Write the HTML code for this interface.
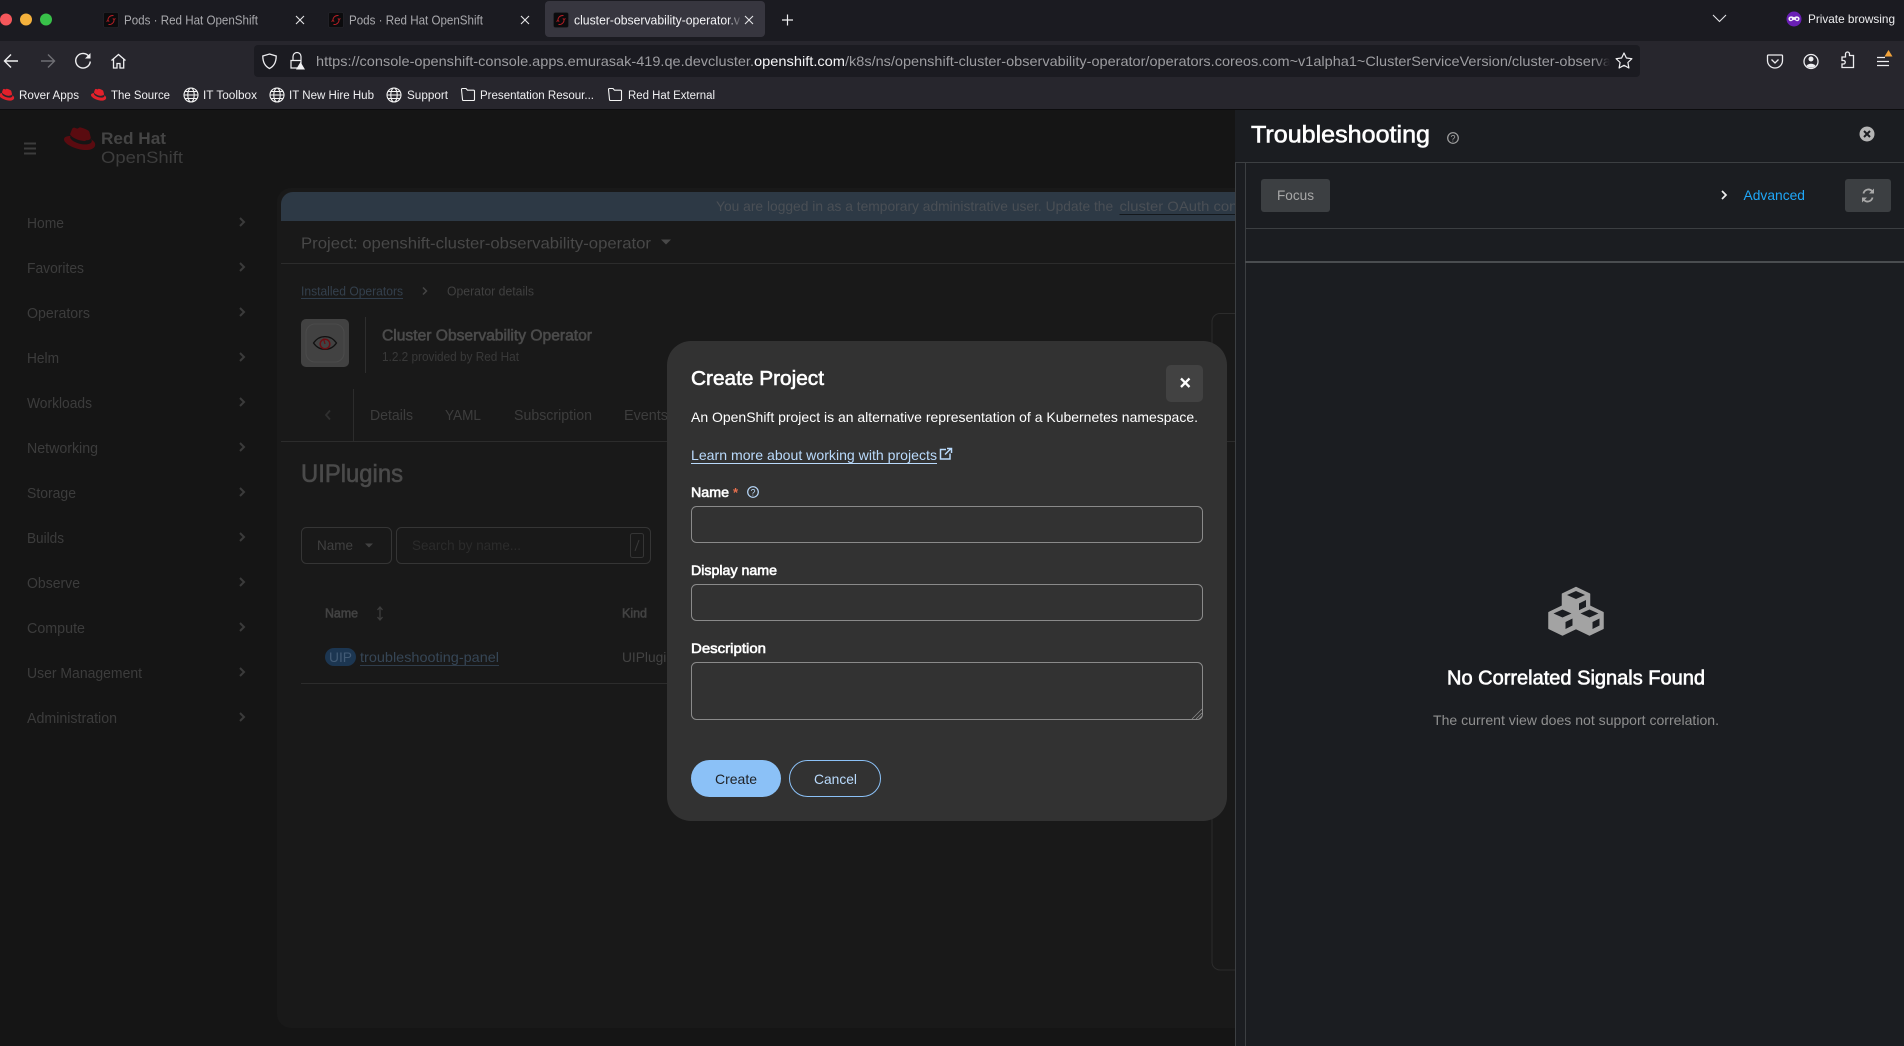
<!DOCTYPE html>
<html lang="en">
<head>
<meta charset="utf-8">
<title>Create Project</title>
<style>
html,body{margin:0;padding:0;background:#151515;overflow:hidden}
svg{display:block}
text{font-family:"Liberation Sans",sans-serif;white-space:pre}
.m{stroke-width:.35px;paint-order:stroke}
.h{stroke-width:.6px;paint-order:stroke}
</style>
</head>
<body>
<svg xmlns="http://www.w3.org/2000/svg" width="1904" height="1046" viewBox="0 0 1904 1046">
<defs>
<path id="hat" d="M21 14c2 0 5-.3 5-2.800 0-.2 0-.4-.1-.6l-1.200-5.100C24.400 4.400 24.100 3.800 21.900 2.700 20.200 1.800 16.500.4 15.400.4c-1 0-1.300 1.300-2.500 1.300-1.100 0-2-1-3.100-1-1 0-1.700.7-2.200 2.100 0 0-1.400 4-1.600 4.600 0 .1 0 .2 0 .3 0 1.600 6.400 7 15 7zM26.700 12.900c.3 1.400.3 1.500.3 1.700 0 2.400-2.700 3.700-6.200 3.700C12.900 18.300 6 13.700 6 10.600c0-.5.1-.9.3-1.300C3.500 9.500 0 10 0 13c0 5 11.900 11.200 21.300 11.200 7.200 0 9-3.300 9-5.800 0-2-1.700-4.300-4.800-5.500z"/>
<g id="globe" fill="none" stroke="#f4f4f4" stroke-width="1.100"><circle r="7"/><ellipse rx="3.200" ry="7"/><path d="M-7 0H7M-6 -3.500H6M-6 3.500H6"/></g>
<path id="folder" fill="none" stroke="#f4f4f4" stroke-width="1.100" d="M-6.500-5.500a1 1 0 0 1 1-1h3.500l1.500 1.700h6a1 1 0 0 1 1 1v8.300a1 1 0 0 1-1 1h-10a1 1 0 0 1-1-1z"/>
<g id="fav"><rect x="-7.500" y="-7.500" width="15" height="15" rx="2" fill="#0b0b0d" stroke="#2a2a30" stroke-width=".6"/><path d="M2.500-4.500C-1-5-3.500-2-3 1M-2.500 4.500C1 5 3.500 2 3-1M-4.500 1.500l1.500-1 1.200 1M4.500-1.500l-1.500 1-1.200-1" fill="none" stroke="#b81f26" stroke-width="1"/></g>
<path id="chev" fill="none" stroke="#3b3b3b" stroke-width="2" d="M-2-4L2 0L-2 4"/>
<g id="cube"><path d="M0-14.500L13.500-8V8L0 14.500L-13.500 8V-8Z" fill="#a3a3a3" stroke="#a3a3a3" stroke-width="1.500" stroke-linejoin="round"/><path d="M0-11L9-7L0-3L-9-7Z" fill="#1b1d21"/><path d="M3 1.500L10-2V5L3 8.500Z" fill="#1b1d21"/></g>
<linearGradient id="fadeD" x1="0" x2="1" y1="0" y2="0"><stop offset="0" stop-color="#1c1b21" stop-opacity="0"/><stop offset="1" stop-color="#1c1b21"/></linearGradient>
<linearGradient id="fadeT" x1="0" x2="1" y1="0" y2="0"><stop offset="0" stop-color="#37363f" stop-opacity="0"/><stop offset="1" stop-color="#37363f"/></linearGradient>
<clipPath id="pageClip"><rect x="0" y="110" width="1235" height="936"/></clipPath>
</defs>

<!-- browser chrome -->
<rect width="1904" height="41" fill="#1b1b21"/>
<rect y="41" width="1904" height="68" fill="#27262d"/>
<rect y="109" width="1904" height="1" fill="#0c0c0e"/>
<circle cx="6" cy="19.500" r="6" fill="#f5575b"/><circle cx="26" cy="19.500" r="6" fill="#f4b13c"/><circle cx="46" cy="19.500" r="6" fill="#38c149"/>

<use href="#fav" x="111" y="20"/>
<text x="124" y="24.500" font-size="12.500" fill="#a9a9ad" textLength="134" lengthAdjust="spacingAndGlyphs">Pods · Red Hat OpenShift</text>
<path d="M296 16l8 8m0-8l-8 8" stroke="#e5e5e8" stroke-width="1.100"/>
<use href="#fav" x="336" y="20"/>
<text x="349" y="24.500" font-size="12.500" fill="#a9a9ad" textLength="134" lengthAdjust="spacingAndGlyphs">Pods · Red Hat OpenShift</text>
<path d="M521 16l8 8m0-8l-8 8" stroke="#e5e5e8" stroke-width="1.100"/>
<rect x="545" y="1" width="220" height="36" rx="4" fill="#37363f"/>
<use href="#fav" x="561" y="20"/>
<text x="574" y="24.500" font-size="12.500" fill="#f4f4f6" textLength="166" lengthAdjust="spacingAndGlyphs">cluster-observability-operator.v</text>
<rect x="728" y="3" width="14" height="32" fill="url(#fadeT)"/>
<path d="M745 16l8 8m0-8l-8 8" stroke="#e5e5e8" stroke-width="1.100"/>
<path d="M787.500 14.500v11m-5.500-5.500h11" stroke="#efeff1" stroke-width="1.200"/>
<path d="M1713 15l6.500 6.500L1726 15" fill="none" stroke="#e6e6e8" stroke-width="1.100"/>
<circle cx="1794" cy="19" r="7.500" fill="#6a1fb5"/>
<path d="M1788.500 18c1-2 3.500-2 5.500-.7 2-1.300 4.500-1.300 5.500.7.500 2.500-2 4-3.500 2.800l-2-1-2 1c-1.500 1.200-4-.3-3.500-2.800z" fill="#f2edf9"/>
<circle cx="1791" cy="19" r="1" fill="#6a1fb5"/><circle cx="1797" cy="19" r="1" fill="#6a1fb5"/>
<text x="1808" y="23" font-size="12" fill="#eeeef0" textLength="87" lengthAdjust="spacingAndGlyphs">Private browsing</text>

<!-- nav icons -->
<path d="M18 61H5m6-6.500L4.500 61l6.500 6.500" fill="none" stroke="#f0f0f2" stroke-width="1.400"/>
<path d="M41 61h13m-6-6.500l6.500 6.500L48 67.500" fill="none" stroke="#6f6f74" stroke-width="1.400"/>
<path d="M89 56.500a7.300 7.300 0 1 0 1.300 5" fill="none" stroke="#f0f0f2" stroke-width="1.400"/><path d="M90.500 53v5.500h-5.500z" fill="#f0f0f2"/>
<path d="M111.500 60.500L118.500 54.500l7 6M113.500 59v9h3.500v-4.500h3V68h3.700v-9" fill="none" stroke="#f0f0f2" stroke-width="1.300"/>
<rect x="254" y="45" width="1386" height="32" rx="4" fill="#1b1b21"/>
<path d="M269.500 54l6.700 2c0 5.500-1.700 10-6.700 12.500-5-2.500-6.700-7-6.700-12.500z" fill="none" stroke="#ededf0" stroke-width="1.300"/>
<path d="M293 60v-3.500a4 4 0 0 1 8 0V60M291 60.500h10V68h-10z" fill="none" stroke="#ededf0" stroke-width="1.200"/>
<path d="M300.500 62l4.500 7.500h-9z" fill="#f2f2f4"/>
<text x="316" y="66" font-size="14" fill="#9d9da1" textLength="438" lengthAdjust="spacingAndGlyphs">https://console-openshift-console.apps.emurasak-419.qe.devcluster.</text>
<text x="754" y="66" font-size="14" fill="#f6f6f8" textLength="91" lengthAdjust="spacingAndGlyphs">openshift.com</text>
<text x="845" y="66" font-size="14" fill="#9d9da1" textLength="766" lengthAdjust="spacingAndGlyphs">/k8s/ns/openshift-cluster-observability-operator/operators.coreos.com~v1alpha1~ClusterServiceVersion/cluster-observa</text>
<rect x="1595" y="50" width="15" height="22" fill="url(#fadeD)"/><rect x="1610" y="46" width="28" height="30" fill="#1b1b21"/>
<path d="M1624 53l2.400 5 5.500.7-4 3.800 1 5.500-4.900-2.700-4.900 2.700 1-5.500-4-3.800 5.500-.7z" fill="none" stroke="#f0f0f2" stroke-width="1.200" stroke-linejoin="round"/>
<path d="M1768.500 55h13a1 1 0 0 1 1 1v4.500a7.500 7.500 0 0 1-15 0V56a1 1 0 0 1 1-1z" fill="none" stroke="#ededf0" stroke-width="1.300"/><path d="M1771.500 59.500l3.500 3.500 3.500-3.500" fill="none" stroke="#ededf0" stroke-width="1.300"/>
<circle cx="1811" cy="61.500" r="7" fill="none" stroke="#ededf0" stroke-width="1.300"/><circle cx="1811" cy="59" r="2.500" fill="#ededf0"/><path d="M1806.500 66c1-3 8-3 9 0a7 7 0 0 1-9 0z" fill="#ededf0"/>
<path d="M1842 67.500h11.500v-12h-4v-1.500a2 2 0 0 0-4 0v3h-3.500v3.500h1.500a1.700 1.700 0 0 1 0 3.500h-1.500z" fill="none" stroke="#ededf0" stroke-width="1.300"/>
<path d="M1877 57.500h8m-8 4h12m-12 4h12" stroke="#ededf0" stroke-width="1.300"/>
<path d="M1888.500 50l4 6.500h-8z" fill="#f2a33a"/>

<!-- bookmarks -->
<g transform="translate(-1,88.500) scale(.5)" fill="#e3212b"><use href="#hat"/></g>
<text x="19" y="99" font-size="11.500" fill="#efeff1" textLength="60" lengthAdjust="spacingAndGlyphs">Rover Apps</text>
<g transform="translate(91,88.500) scale(.5)" fill="#e3212b"><use href="#hat"/></g>
<text x="111" y="99" font-size="11.500" fill="#efeff1" textLength="59" lengthAdjust="spacingAndGlyphs">The Source</text>
<use href="#globe" x="191" y="95"/>
<text x="203" y="99" font-size="11.500" fill="#efeff1" textLength="54" lengthAdjust="spacingAndGlyphs">IT Toolbox</text>
<use href="#globe" x="277" y="95"/>
<text x="289" y="99" font-size="11.500" fill="#efeff1" textLength="85" lengthAdjust="spacingAndGlyphs">IT New Hire Hub</text>
<use href="#globe" x="394" y="95"/>
<text x="407" y="99" font-size="11.500" fill="#efeff1" textLength="41" lengthAdjust="spacingAndGlyphs">Support</text>
<use href="#folder" x="468" y="95"/>
<text x="480" y="99" font-size="11.500" fill="#efeff1" textLength="114" lengthAdjust="spacingAndGlyphs">Presentation Resour...</text>
<use href="#folder" x="615" y="95"/>
<text x="628" y="99" font-size="11.500" fill="#efeff1" textLength="87" lengthAdjust="spacingAndGlyphs">Red Hat External</text>

<!-- page behind backdrop -->
<g clip-path="url(#pageClip)">
<rect x="0" y="110" width="1904" height="936" fill="#151515"/>
<rect x="277" y="188" width="1000" height="840" rx="14" fill="#191919"/>
<path d="M24 143.500h12m-12 5h12m-12 5h12" stroke="#3c3c3c" stroke-width="2"/>
<g transform="translate(64,127) scale(1.030,.95)" fill="#5a0b10"><use href="#hat"/></g>
<text x="101" y="144" font-size="17" font-weight="700" fill="#444" textLength="65" lengthAdjust="spacingAndGlyphs">Red Hat</text>
<text x="101" y="163" font-size="17" fill="#3d3d3d" textLength="82" lengthAdjust="spacingAndGlyphs">OpenShift</text>

<g font-size="14.500" fill="#3c3c3c">
<text x="27" y="228" textLength="37" lengthAdjust="spacingAndGlyphs">Home</text>
<text x="27" y="273" textLength="57" lengthAdjust="spacingAndGlyphs">Favorites</text>
<text x="27" y="318" textLength="63" lengthAdjust="spacingAndGlyphs">Operators</text>
<text x="27" y="363" textLength="32" lengthAdjust="spacingAndGlyphs">Helm</text>
<text x="27" y="408" textLength="65" lengthAdjust="spacingAndGlyphs">Workloads</text>
<text x="27" y="453" textLength="71" lengthAdjust="spacingAndGlyphs">Networking</text>
<text x="27" y="498" textLength="49" lengthAdjust="spacingAndGlyphs">Storage</text>
<text x="27" y="543" textLength="37" lengthAdjust="spacingAndGlyphs">Builds</text>
<text x="27" y="588" textLength="53" lengthAdjust="spacingAndGlyphs">Observe</text>
<text x="27" y="633" textLength="58" lengthAdjust="spacingAndGlyphs">Compute</text>
<text x="27" y="678" textLength="115" lengthAdjust="spacingAndGlyphs">User Management</text>
<text x="27" y="723" textLength="90" lengthAdjust="spacingAndGlyphs">Administration</text>
</g>
<use href="#chev" x="242" y="222"/><use href="#chev" x="242" y="267"/><use href="#chev" x="242" y="312"/><use href="#chev" x="242" y="357"/><use href="#chev" x="242" y="402"/><use href="#chev" x="242" y="447"/><use href="#chev" x="242" y="492"/><use href="#chev" x="242" y="537"/><use href="#chev" x="242" y="582"/><use href="#chev" x="242" y="627"/><use href="#chev" x="242" y="672"/><use href="#chev" x="242" y="717"/>

<path d="M281 221V204a12 12 0 0 1 12-12H1240V221Z" fill="#2d3945"/>
<text x="716" y="211" font-size="14" fill="#4a4f55" textLength="401" lengthAdjust="spacingAndGlyphs">You are logged in as a temporary administrative user. Update the </text>
<text x="1119.500" y="211" font-size="14" fill="#4a4f55" textLength="122" lengthAdjust="spacingAndGlyphs">cluster OAuth conf</text>
<rect x="1119.500" y="214" width="116" height="1" fill="#14181c"/>

<text x="301" y="248.500" font-size="16" fill="#484848" textLength="350" lengthAdjust="spacingAndGlyphs">Project: openshift-cluster-observability-operator</text>
<path d="M661 239.500h10l-5 5z" fill="#484848"/>
<rect x="281" y="263" width="960" height="1" fill="#2c2c2c"/>

<text x="301" y="295.500" font-size="12.500" fill="#34404d" textLength="102" lengthAdjust="spacingAndGlyphs">Installed Operators</text>
<rect x="301" y="298" width="102" height="1" fill="#2f3c4a"/>
<path d="M423 287.500l3.500 3.500-3.500 3.500" fill="none" stroke="#444" stroke-width="1.500"/>
<text x="447" y="295.500" font-size="12.500" fill="#404040" textLength="87" lengthAdjust="spacingAndGlyphs">Operator details</text>

<rect x="301" y="319" width="48" height="48" rx="5" fill="#424242"/>
<rect x="306" y="324" width="38" height="38" rx="9" fill="none" stroke="#4b4b4b"/>
<path d="M313.500 343c6-8.500 17-8.500 23 0-6 8.500-17 8.500-23 0z" fill="none" stroke="#111" stroke-width="1.300"/>
<circle cx="325" cy="344" r="4.800" fill="none" stroke="#6a0f14" stroke-width="1.500"/><path d="M325 344l-1.500-5.500" stroke="#6a0f14" stroke-width="1.300"/>
<rect x="365" y="317" width="1" height="56" fill="#2e2e2e"/>
<text x="382" y="340.500" font-size="15.500" class="h" stroke="#4b4b4b" fill="#4b4b4b" textLength="210" lengthAdjust="spacingAndGlyphs">Cluster Observability Operator</text>
<text x="382" y="361" font-size="12.500" fill="#393939" textLength="137" lengthAdjust="spacingAndGlyphs">1.2.2 provided by Red Hat</text>

<path d="M330 410.500l-4 4.500 4 4.500" fill="none" stroke="#2f2f2f" stroke-width="1.800"/>
<rect x="353" y="389" width="1" height="52" fill="#2c2c2c"/>
<g font-size="14.500" fill="#3d3d3d">
<text x="370" y="420" textLength="43" lengthAdjust="spacingAndGlyphs">Details</text>
<text x="445" y="420" textLength="36" lengthAdjust="spacingAndGlyphs">YAML</text>
<text x="514" y="420" textLength="78" lengthAdjust="spacingAndGlyphs">Subscription</text>
<text x="624" y="420" textLength="44" lengthAdjust="spacingAndGlyphs">Events</text>
</g>
<rect x="281" y="441" width="960" height="1" fill="#2c2c2c"/>

<text x="301" y="482" font-size="25" class="h" stroke="#4a4a4a" fill="#4a4a4a" textLength="102" lengthAdjust="spacingAndGlyphs">UIPlugins</text>

<rect x="301.500" y="527.500" width="90" height="36" rx="5" fill="none" stroke="#353535"/>
<text x="317" y="550" font-size="14" fill="#404040" textLength="36" lengthAdjust="spacingAndGlyphs">Name</text>
<path d="M365 543.500h8l-4 4z" fill="#424242"/>
<rect x="396.500" y="527.500" width="254" height="36" rx="5" fill="none" stroke="#353535"/>
<text x="412" y="550" font-size="14" fill="#2b2b2b" textLength="109" lengthAdjust="spacingAndGlyphs">Search by name...</text>
<rect x="630.500" y="533.500" width="13" height="24" rx="2" fill="none" stroke="#353535"/>
<path d="M635 551l4-11" stroke="#3a3a3a" stroke-width="1"/>

<text x="325" y="617.500" font-size="12.500" class="h" stroke="#424242" fill="#424242" textLength="33" lengthAdjust="spacingAndGlyphs">Name</text>
<path d="M380 608v11m-2.500-9l2.500-3 2.500 3m-5 7l2.500 3 2.500-3" fill="none" stroke="#3d3d3d" stroke-width="1.300"/>
<text x="622" y="617.500" font-size="12.500" class="h" stroke="#424242" fill="#424242" textLength="25" lengthAdjust="spacingAndGlyphs">Kind</text>

<rect x="325" y="648" width="31" height="18" rx="9" fill="#1c3651"/>
<text x="329" y="662" font-size="14" fill="#425b75" textLength="23" lengthAdjust="spacingAndGlyphs">UIP</text>
<text x="360" y="662" font-size="14" fill="#364656" textLength="139" lengthAdjust="spacingAndGlyphs">troubleshooting-panel</text>
<rect x="360" y="665" width="139" height="1" fill="#2f3c4a"/>
<text x="622" y="662" font-size="14" fill="#434343" textLength="52" lengthAdjust="spacingAndGlyphs">UIPlugin</text>
<rect x="301" y="683" width="400" height="1" fill="#2c2c2c"/>

<path d="M1240 313.500H1220a8 8 0 0 0-8 8V962a8 8 0 0 0 8 8H1240" fill="none" stroke="#2c2c2c"/>
</g>

<!-- modal -->
<rect x="667" y="341" width="560" height="480" rx="24" fill="#323232"/>
<text x="691" y="385" font-size="20.500" class="h" stroke="#fff" fill="#fff" textLength="133" lengthAdjust="spacingAndGlyphs">Create Project</text>
<rect x="1166" y="365" width="37" height="37" rx="5" fill="#424242"/>
<path d="M1181 378.500l8.500 8.500m0-8.500l-8.500 8.500" stroke="#fff" stroke-width="2.300"/>
<text x="691" y="422" font-size="14" fill="#fff" textLength="507" lengthAdjust="spacingAndGlyphs">An OpenShift project is an alternative representation of a Kubernetes namespace.</text>
<text x="691" y="460" font-size="14" fill="#b9dafc" textLength="246" lengthAdjust="spacingAndGlyphs">Learn more about working with projects</text>
<rect x="691" y="463" width="246" height="1" fill="#b9dafc"/>
<path d="M946 449.500h-5.500v9.500h9.500v-5.500M945 454.500l5.500-5.500m-3.500-.5h4.500v4.500" fill="none" stroke="#b9dafc" stroke-width="1.500"/>

<text x="691" y="497" font-size="14" class="h" stroke="#fff" fill="#fff" textLength="38" lengthAdjust="spacingAndGlyphs">Name</text>
<text x="733" y="497" font-size="13" fill="#e8704e" font-weight="700">*</text>
<circle cx="753" cy="492" r="5.300" fill="none" stroke="#b9dafc" stroke-width="1.200"/>
<text x="750.500" y="495.500" font-size="9" fill="#b9dafc">?</text>
<rect x="691.500" y="506.500" width="511" height="36" rx="5" fill="none" stroke="#8a8a8a"/>
<text x="691" y="575" font-size="14" class="h" stroke="#fff" fill="#fff" textLength="86" lengthAdjust="spacingAndGlyphs">Display name</text>
<rect x="691.500" y="584.500" width="511" height="36" rx="5" fill="none" stroke="#8a8a8a"/>
<text x="691" y="653" font-size="14" class="h" stroke="#fff" fill="#fff" textLength="75" lengthAdjust="spacingAndGlyphs">Description</text>
<rect x="691.500" y="662.500" width="511" height="57" rx="5" fill="none" stroke="#8a8a8a"/>
<path d="M1192 719l10-10M1196 719l6-6M1199 719l3-3" stroke="#8a8a8a" stroke-width=".8"/>
<rect x="691" y="760" width="90" height="37" rx="18.500" fill="#8bc1f7"/>
<text x="715" y="784" font-size="14" fill="#1f2226" textLength="42" lengthAdjust="spacingAndGlyphs">Create</text>
<rect x="789.500" y="760.500" width="91" height="36" rx="18" fill="none" stroke="#8bc1f7"/>
<text x="814" y="784" font-size="14" fill="#b9dafc" textLength="43" lengthAdjust="spacingAndGlyphs">Cancel</text>

<!-- right panel -->
<rect x="1235" y="110" width="669" height="936" fill="#1b1d21"/>
<rect x="1235" y="162" width="669" height="1" fill="#3c3f42"/>
<rect x="1235" y="162" width="1" height="884" fill="#3c3f42"/>
<rect x="1245" y="162" width="1" height="884" fill="#3c3f42"/>
<rect x="1245" y="228" width="659" height="1" fill="#3c3f42"/>
<rect x="1245" y="261" width="659" height="2" fill="#4a4d50"/>
<text x="1251" y="142.500" font-size="24.500" class="h" stroke="#fff" fill="#fff" textLength="179" lengthAdjust="spacingAndGlyphs">Troubleshooting</text>
<circle cx="1453" cy="138" r="5.300" fill="none" stroke="#a3a3a3" stroke-width="1.200"/>
<text x="1450.500" y="141.500" font-size="9" fill="#a3a3a3">?</text>
<circle cx="1867" cy="134" r="7.500" fill="#b5b5b5"/>
<path d="M1864 131l6 6m0-6l-6 6" stroke="#1b1d21" stroke-width="2"/>
<rect x="1261" y="179" width="69" height="33" rx="3" fill="#3c3f42"/>
<text x="1277" y="200" font-size="14" fill="#a8a8a8" textLength="37" lengthAdjust="spacingAndGlyphs">Focus</text>
<path d="M1722 191l4 4-4 4" fill="none" stroke="#f0f0f0" stroke-width="1.700"/>
<text x="1743.500" y="200" font-size="14" fill="#1fa7f8" textLength="61.500" lengthAdjust="spacingAndGlyphs">Advanced</text>
<rect x="1845" y="179" width="46" height="33" rx="3" fill="#3c3f42"/>
<path d="M1863.500 193.500a5 5 0 0 1 8.500-2.500l1.200 1.200M1872.500 197.500a5 5 0 0 1-8.500 2.500l-1.200-1.200" fill="none" stroke="#a8a8a8" stroke-width="1.800"/>
<path d="M1874 188.500v5h-5zM1862 202.500v-5h5z" fill="#a8a8a8"/>

<use href="#cube" x="1576" y="602"/>
<use href="#cube" x="1562.500" y="620.500"/>
<use href="#cube" x="1589.500" y="620.500"/>
<text x="1447" y="684.500" font-size="20" class="h" stroke="#fff" fill="#fff" textLength="258" lengthAdjust="spacingAndGlyphs">No Correlated Signals Found</text>
<text x="1433" y="725" font-size="14" fill="#8f8f8f" textLength="286" lengthAdjust="spacingAndGlyphs">The current view does not support correlation.</text>
</svg>
</body>
</html>
